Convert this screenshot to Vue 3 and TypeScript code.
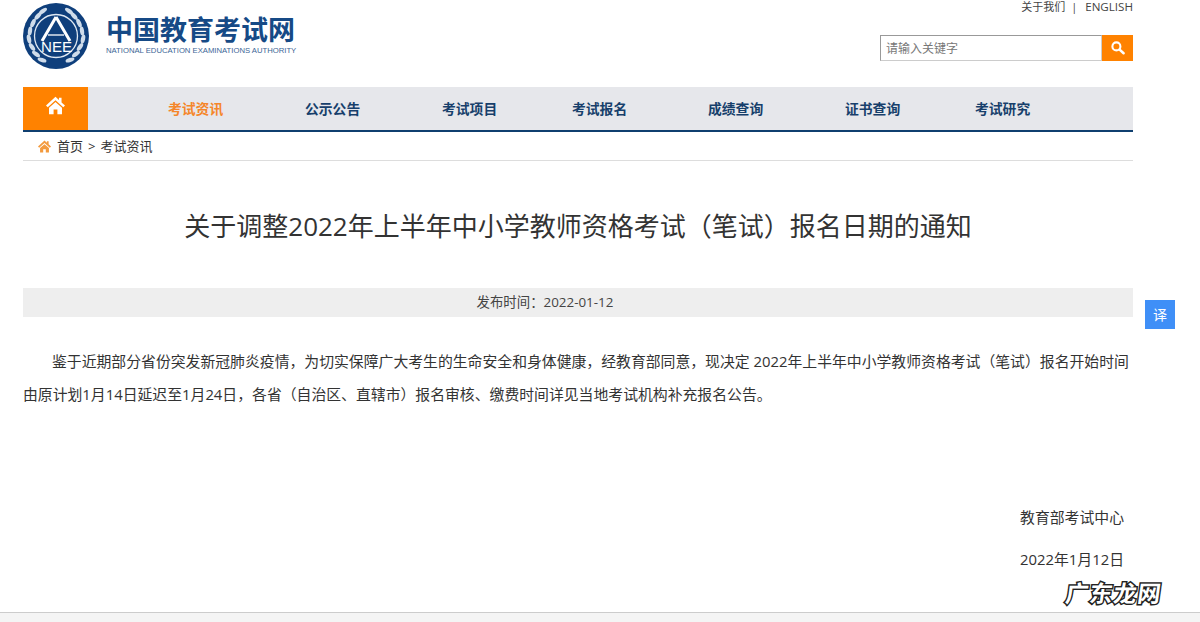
<script setup lang="ts">
const navItems = [
  { label: '考试资讯', width: 137, active: true },
  { label: '公示公告', width: 137 },
  { label: '考试项目', width: 130 },
  { label: '考试报名', width: 136 },
  { label: '成绩查询', width: 137 },
  { label: '证书查询', width: 130 },
  { label: '考试研究', width: 130 },
]

const laurelLeft = [
  [9, 44, -35], [6, 36, -12], [7, 28, 8], [10, 20, 25], [15, 13, 42], [20, 8, 55],
  [13, 51, -55], [19, 57, -72],
]
</script>

<template>
  <div class="page">
    <div class="wrap">
      <header class="top">
        <div class="logo">
          <svg class="emblem" viewBox="0 0 66 66" width="66" height="66">
            <circle cx="33" cy="33" r="33" fill="#0f3f7c" />
            <circle cx="33" cy="33" r="21.5" fill="none" stroke="#dfe8f2" stroke-width="1.3" />
            <g fill="#cfdcea">
              <g v-for="(l, i) in laurelLeft" :key="i">
                <ellipse :cx="l[0]" :cy="l[1]" rx="2.1" ry="4.6" :transform="`rotate(${l[2]} ${l[0]} ${l[1]})`" />
                <ellipse :cx="66 - l[0]" :cy="l[1]" rx="2.1" ry="4.6" :transform="`rotate(${-l[2]} ${66 - l[0]} ${l[1]})`" />
              </g>
            </g>
            <path d="M33 14 L19 38 M33 14 L47 38" stroke="#fff" stroke-width="3" fill="none" />
            <path d="M25 32 H41" stroke="#fff" stroke-width="1.3" />
            <text x="18" y="48.5" class="emblem-text" textLength="31" lengthAdjust="spacingAndGlyphs">NEE</text>
          </svg>
          <div class="logo-text">
            <div class="logo-cn">中国教育考试网</div>
            <div class="logo-en">NATIONAL EDUCATION EXAMINATIONS AUTHORITY</div>
          </div>
        </div>
        <div class="top-right">
          <div class="links"><span>关于我们</span><span class="sep">|</span><span class="en">ENGLISH</span></div>
          <div class="search">
            <div class="search-input">请输入关键字</div>
            <div class="search-btn">
              <svg viewBox="0 0 20 20" width="16" height="16">
                <circle cx="8" cy="8" r="5" fill="none" stroke="#fff" stroke-width="2.6" />
                <path d="M12 12 L17 16.5" stroke="#fff" stroke-width="3.2" stroke-linecap="round" />
              </svg>
            </div>
          </div>
        </div>
      </header>

      <nav class="nav">
        <div class="home">
          <svg viewBox="0 0 24 22" width="21" height="19">
            <path d="M12 1 L1 11 L3 13 L12 5 L21 13 L23 11 L19 7.4 V2 H16 V4.7 Z" fill="#fff" />
            <path d="M4.5 13.5 L12 7 L19.5 13.5 V21 H14.2 V15.5 H9.8 V21 H4.5 Z" fill="#fff" />
          </svg>
        </div>
        <ul class="nav-list">
          <li
            v-for="item in navItems"
            :key="item.label"
            :class="{ active: item.active }"
            :style="{ width: item.width + 'px' }"
          >{{ item.label }}</li>
        </ul>
      </nav>

      <div class="crumb">
        <svg viewBox="0 0 24 22" width="15" height="13">
          <path d="M12 1 L1 11 L3 13 L12 5 L21 13 L23 11 L19 7.4 V2 H16 V4.7 Z" fill="#f39a3d" />
          <path d="M4.5 13.5 L12 7 L19.5 13.5 V21 H14.2 V15.5 H9.8 V21 H4.5 Z" fill="#f39a3d" />
        </svg>
        <span>首页</span><span class="gt">&gt;</span><span>考试资讯</span>
      </div>

      <h1 class="title">关于调整2022年上半年中小学教师资格考试（笔试）报名日期的通知</h1>

      <div class="meta">发布时间：2022-01-12</div>

      <div class="article">
        <p class="para">鉴于近期部分省份突发新冠肺炎疫情，为切实保障广大考生的生命安全和身体健康，经教育部同意，现决定 2022年上半年中小学教师资格考试（笔试）报名开始时间由原计划1月14日延迟至1月24日，各省（自治区、直辖市）报名审核、缴费时间详见当地考试机构补充报名公告。</p>
        <div class="sign">
          <p>教育部考试中心</p>
          <p>2022年1月12日</p>
        </div>
      </div>
    </div>

    <div class="translate">译</div>
    <div class="watermark">广东龙网</div>
    <footer class="footer"></footer>
  </div>
</template>

<style>
html, body {
  margin: 0;
  background: #fff;
}
</style>

<style scoped>
.page {
  position: relative;
  height: 622px;
  overflow: hidden;
  font-family: "Open Sans", "Noto Sans CJK SC", sans-serif;
  color: #333;
}

.wrap {
  width: 1110px;
  margin-left: 23px;
}

.top {
  height: 87px;
  display: flex;
  justify-content: space-between;
}

.logo {
  display: flex;
  align-items: flex-start;
  padding-top: 3px;
}

.emblem-text {
  font-family: "Liberation Sans", sans-serif;
  font-size: 14.5px;
  fill: #fff;
}

.logo-text {
  margin-left: 17px;
  padding-top: 10px;
}

.logo-cn {
  font-family: "Noto Sans CJK SC", sans-serif;
  font-weight: 700;
  font-size: 27px;
  line-height: 32px;
  color: #164a86;
}

.logo-en {
  font-family: "Liberation Sans", sans-serif;
  font-size: 7.7px;
  line-height: 10px;
  color: #3c6596;
  margin-top: 1px;
  white-space: nowrap;
}

.top-right {
  display: flex;
  flex-direction: column;
  align-items: flex-end;
}

.links {
  height: 35px;
  font-size: 11px;
  line-height: 14px;
  color: #444;
}

.en {
  font-size: 11.6px;
}

.sep {
  margin: 0 8px 0 6px;
}

.search {
  display: flex;
  width: 253px;
  height: 26px;
}

.search-input {
  flex: 1;
  box-sizing: border-box;
  border: 1px solid #ccc;
  border-top-color: #999;
  border-left-color: #999;
  padding-left: 5px;
  font-size: 12px;
  line-height: 25px;
  color: #777;
}

.search-btn {
  width: 31px;
  background: #ff8200;
  display: flex;
  align-items: center;
  justify-content: center;
}

.nav {
  height: 43px;
  display: flex;
  background: #e6e7eb;
  border-bottom: 2px solid #0f3f6f;
}

.home {
  width: 65px;
  background: #ff8200;
  display: flex;
  align-items: center;
  justify-content: center;
  padding-bottom: 6px;
  box-sizing: border-box;
}

.nav-list {
  list-style: none;
  margin: 0;
  padding: 0 0 0 80px;
  display: flex;
}

.nav-list li {
  font-size: 13.8px;
  font-weight: 700;
  line-height: 44px;
  color: #173f6b;
  white-space: nowrap;
}

.nav-list li.active {
  color: #f5862a;
}

.crumb {
  height: 27px;
  display: flex;
  align-items: center;
  padding-left: 14px;
  padding-bottom: 1px;
  border-bottom: 1px solid #ddd;
  font-size: 13px;
  color: #333;
}

.crumb svg {
  margin-right: 5px;
  margin-top: 2px;
}

.gt {
  margin: 0 5px;
}

.title {
  margin: 0;
  padding-top: 46px;
  text-align: center;
  font-size: 26px;
  font-weight: 400;
  line-height: 38px;
  color: #333;
}

.meta {
  margin-top: 43px;
  height: 29px;
  line-height: 29px;
  padding-right: 66px;
  background: #eee;
  text-align: center;
  font-size: 13.4px;
  color: #444;
}

.article {
  font-size: 14.85px;
  color: #333;
}

.para {
  margin: 28px 0 0;
  text-indent: 29px;
  line-height: 33px;
}

.sign {
  margin-top: 96px;
  text-align: right;
  padding-right: 9px;
}

.sign p {
  margin: 0 0 22px;
  line-height: 20px;
}

.translate {
  position: absolute;
  left: 1145px;
  top: 300px;
  width: 30px;
  height: 29px;
  background: #3f8ff7;
  color: #fff;
  text-align: center;
  font-size: 14px;
  line-height: 29px;
}

.watermark {
  position: absolute;
  left: 1066px;
  top: 577px;
  font-family: "Noto Sans CJK SC", sans-serif;
  font-size: 23px;
  line-height: 30px;
  font-weight: 700;
  color: #fff;
  letter-spacing: 1px;
  transform: skewX(-8deg);
  -webkit-text-stroke: 3px #222;
  paint-order: stroke fill;
}

.footer {
  position: absolute;
  left: 0;
  right: 0;
  top: 612px;
  height: 10px;
  box-sizing: border-box;
  background: #f4f4f4;
  border-top: 1px solid #ccc;
}
</style>
